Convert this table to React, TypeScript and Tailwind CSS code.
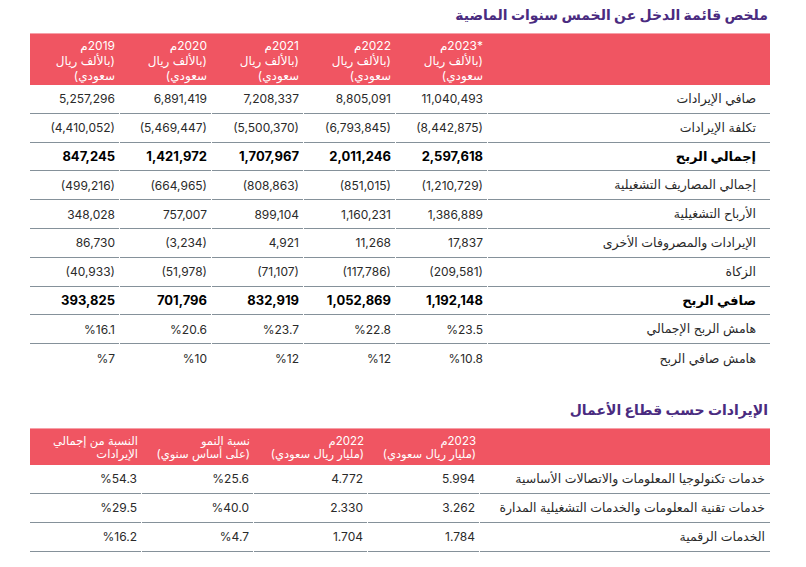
import React from "react"

const incomeRows = [
  { label: "صافي الإيرادات", vals: ["11,040,493", "8,805,091", "7,208,337", "6,891,419", "5,257,296"] },
  { label: "تكلفة الإيرادات", vals: ["(8,442,875)", "(6,793,845)", "(5,500,370)", "(5,469,447)", "(4,410,052)"] },
  { label: "إجمالي الربح", vals: ["2,597,618", "2,011,246", "1,707,967", "1,421,972", "847,245"], bold: true },
  { label: "إجمالي المصاريف التشغيلية", vals: ["(1,210,729)", "(851,015)", "(808,863)", "(664,965)", "(499,216)"] },
  { label: "الأرباح التشغيلية", vals: ["1,386,889", "1,160,231", "899,104", "757,007", "348,028"] },
  { label: "الإيرادات والمصروفات الأخرى", vals: ["17,837", "11,268", "4,921", "(3,234)", "86,730"] },
  { label: "الزكاة", vals: ["(209,581)", "(117,786)", "(71,107)", "(51,978)", "(40,933)"] },
  { label: "صافي الربح", vals: ["1,192,148", "1,052,869", "832,919", "701,796", "393,825"], bold: true },
  { label: "هامش الربح الإجمالي", vals: ["%23.5", "%22.8", "%23.7", "%20.6", "%16.1"] },
  { label: "هامش صافي الربح", vals: ["%10.8", "%12", "%12", "%10", "%7"] },
]

const years = ["*2023م", "2022م", "2021م", "2020م", "2019م"]

const segmentRows = [
  { label: "خدمات تكنولوجيا المعلومات والاتصالات الأساسية", vals: ["5.994", "4.772", "%25.6", "%54.3"] },
  { label: "خدمات تقنية المعلومات والخدمات التشغيلية المدارة", vals: ["3.262", "2.330", "%40.0", "%29.5"] },
  { label: "الخدمات الرقمية", vals: ["1.784", "1.704", "%4.7", "%16.2"] },
]

const segmentHead = [
  ["2023م", "(مليار ريال سعودي)"],
  ["2022م", "(مليار ريال سعودي)"],
  ["نسبة النمو", "(على أساس سنوي)"],
  ["النسبة من إجمالي", "الإيرادات"],
]

// rtl grids: first column sits on the right
const grid1 = "grid grid-cols-[1fr_91px_91px_91px_91px_89px] gap-x-px"
const grid2 = "grid grid-cols-[1fr_111px_113px_111px_111px] gap-x-px"

function Title({ text }: { text: string }) {
  return <h2 className="text-right text-[14px] font-bold text-[#4a2b80] leading-[20px] pr-[2px]">{text}</h2>
}

export default function App() {
  return (
    <div dir="rtl" className="w-[806px] h-[567px] bg-white font-['Inter','DejaVu_Sans',sans-serif] text-[#2a2a2a] overflow-hidden">
      <div className="mr-[36px] w-[740px] pt-[5px]">
        <Title text="ملخص قائمة الدخل عن الخمس سنوات الماضية" />

        <div className="mt-[8px]">
          <div className={`${grid1} bg-[#f05562] h-[52px] border-t border-[#f6a0a8]`}>
            <div />
            {years.map((y) => (
              <div key={y} className="text-right text-white text-[12px] leading-[15px] pr-[4px] pt-[4px] whitespace-nowrap">
                {y}
                <br />
                {"(بالألف ريال"}
                <br />
                {"سعودي)"}
              </div>
            ))}
          </div>

          {incomeRows.map((r, i) => {
            const line = i < incomeRows.length - 1 ? "border-b border-[#85919a]" : ""
            return (
              <div key={r.label} className={`${grid1} h-[28.8px]`}>
                <div className={`flex items-center justify-start pr-[14px] pt-[1px] ${line} ${r.bold ? "font-bold text-black text-[13px]" : "text-[12.5px]"}`}>
                  {r.label}
                </div>
                {r.vals.map((v, j) => (
                  <div
                    key={j}
                    dir="ltr"
                    className={`flex items-center justify-end pr-[4px] pt-[1px] ${line} ${r.bold ? "font-bold text-black text-[13px]" : "text-[12px]"}`}
                  >
                    {v}
                  </div>
                ))}
              </div>
            )
          })}
        </div>

        <div className="mt-[27px]">
          <Title text="الإيرادات حسب قطاع الأعمال" />
        </div>

        <div className="mt-[8px]">
          <div className={`${grid2} bg-[#f05562] h-[37px] border-t border-[#f6a0a8]`}>
            <div />
            {segmentHead.map((h, i) => (
              <div key={i} className="text-right text-white text-[11.5px] leading-[13.5px] pr-[3px] pt-[6px] whitespace-nowrap">
                {h[0]}
                <br />
                {h[1]}
              </div>
            ))}
          </div>

          {segmentRows.map((r) => (
            <div key={r.label} className={`${grid2} h-[29px]`}>
              <div className="flex items-center justify-start pr-[5px] border-b border-[#85919a] text-[12.5px]">{r.label}</div>
              {r.vals.map((v, j) => (
                <div key={j} dir="ltr" className="flex items-center justify-end pr-[4px] border-b border-[#85919a] text-[12px]">
                  {v}
                </div>
              ))}
            </div>
          ))}
        </div>
      </div>
    </div>
  )
}
